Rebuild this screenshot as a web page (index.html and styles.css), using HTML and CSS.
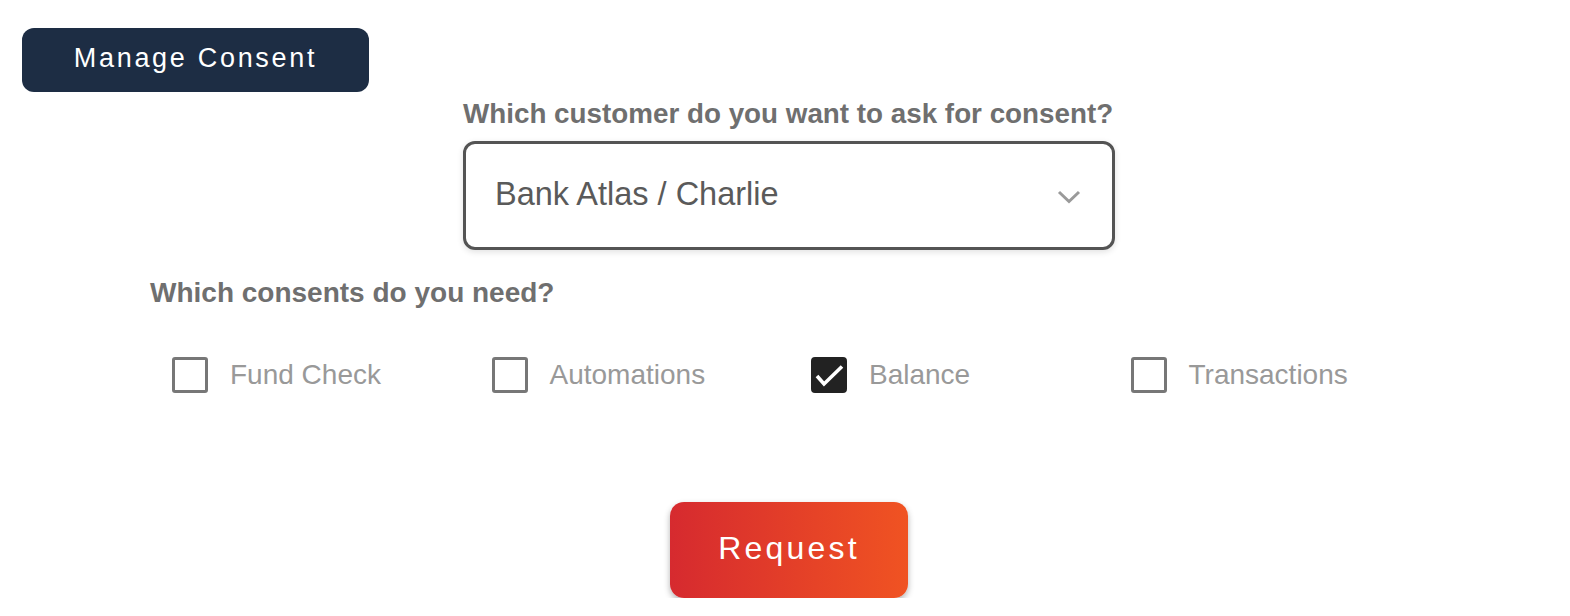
FILE: index.html
```html
<!DOCTYPE html>
<html lang="en">
<head>
<meta charset="utf-8">
<title>Manage Consent</title>
<link rel="stylesheet" href="styles.css">
</head>
<body>
<header class="top-bar">
  <button class="btn-manage" type="button">Manage Consent</button>
</header>
<main class="form">
  <section class="customer">
    <label class="field-label" for="customer">Which customer do you want to ask for consent?</label>
    <div class="select" id="customer">
      <span class="select-value">Bank Atlas / Charlie</span>
      <svg class="chevron" width="24" height="14" viewBox="0 0 24 14" aria-hidden="true">
        <path d="M2 2 L12 11.5 L22 2" fill="none" stroke="#9a9a9a" stroke-width="3"/>
      </svg>
    </div>
  </section>
  <h2 class="field-label consents-label">Which consents do you need?</h2>
  <div class="consents">
    <label class="consent"><span class="box"></span><span class="consent-text">Fund Check</span></label>
    <label class="consent"><span class="box"></span><span class="consent-text">Automations</span></label>
    <label class="consent"><span class="box checked"><svg width="36" height="36" viewBox="0 0 36 36" aria-hidden="true"><path d="M6 19 L13 27 L31 9.5" fill="none" stroke="#fff" stroke-width="3.6"/></svg></span><span class="consent-text">Balance</span></label>
    <label class="consent"><span class="box"></span><span class="consent-text">Transactions</span></label>
  </div>
  <div class="actions">
    <button class="btn-request" type="button">Request</button>
  </div>
</main>
</body>
</html>
```

FILE: styles.css
```css
* { box-sizing: border-box; }

body {
  margin: 0;
  background: #ffffff;
  font-family: "Liberation Sans", Arial, Helvetica, sans-serif;
}

.top-bar {
  padding: 28px 0 0 22px;
}

.btn-manage {
  width: 347px;
  height: 64px;
  border: none;
  border-radius: 12px;
  background: #1d2d44;
  color: #ffffff;
  font-family: inherit;
  font-size: 27px;
  letter-spacing: 0.1em;
  padding: 0 0 4px;
  cursor: pointer;
}

.form {
  width: 1278px;
  margin-left: 150px;
}

.customer {
  width: 652px;
  margin: 6px auto 0;
  display: flex;
  flex-direction: column;
}

.field-label {
  display: block;
  margin: 0;
  font-size: 28px;
  line-height: 32px;
  font-weight: 700;
  color: #6f6f6f;
  white-space: nowrap;
}

.customer .field-label {
  font-size: 27.8px;
}

.select {
  margin-top: 11px;
  height: 109px;
  border: 3px solid #545454;
  border-radius: 12px;
  display: flex;
  align-items: center;
  justify-content: space-between;
  padding: 0 31px 0 29px;
  box-shadow: 0 2px 6px rgba(0, 0, 0, 0.12);
}

.select-value {
  font-size: 32.5px;
  color: #5a5a5a;
  margin-top: -3px;
}

.chevron { display: block; margin-top: 2px; }

.consents-label {
  margin-top: 27px;
}

.consents {
  margin-top: 48px;
  display: grid;
  grid-template-columns: repeat(4, 1fr);
}

.consent {
  display: flex;
  align-items: center;
  padding-left: 22px;
  gap: 22px;
}

.box {
  position: relative;
  width: 36px;
  height: 36px;
  border: 3px solid #777777;
  border-radius: 3px;
}

.box.checked {
  background: #222222;
  border-color: #222222;
  border-radius: 4px;
}

.box svg {
  position: absolute;
  left: -3px;
  top: -3px;
  display: block;
}

.consent-text {
  font-size: 28px;
  color: #999999;
}

.actions {
  margin-top: 109px;
  display: flex;
  justify-content: center;
}

.btn-request {
  width: 238px;
  height: 96px;
  border: none;
  border-radius: 14px;
  background: linear-gradient(90deg, #d62a2f 0%, #f05322 100%);
  color: #ffffff;
  font-family: inherit;
  font-size: 32px;
  letter-spacing: 0.1em;
  padding: 0 0 3px;
  box-shadow: 0 3px 6px rgba(0, 0, 0, 0.3);
  cursor: pointer;
}
```
